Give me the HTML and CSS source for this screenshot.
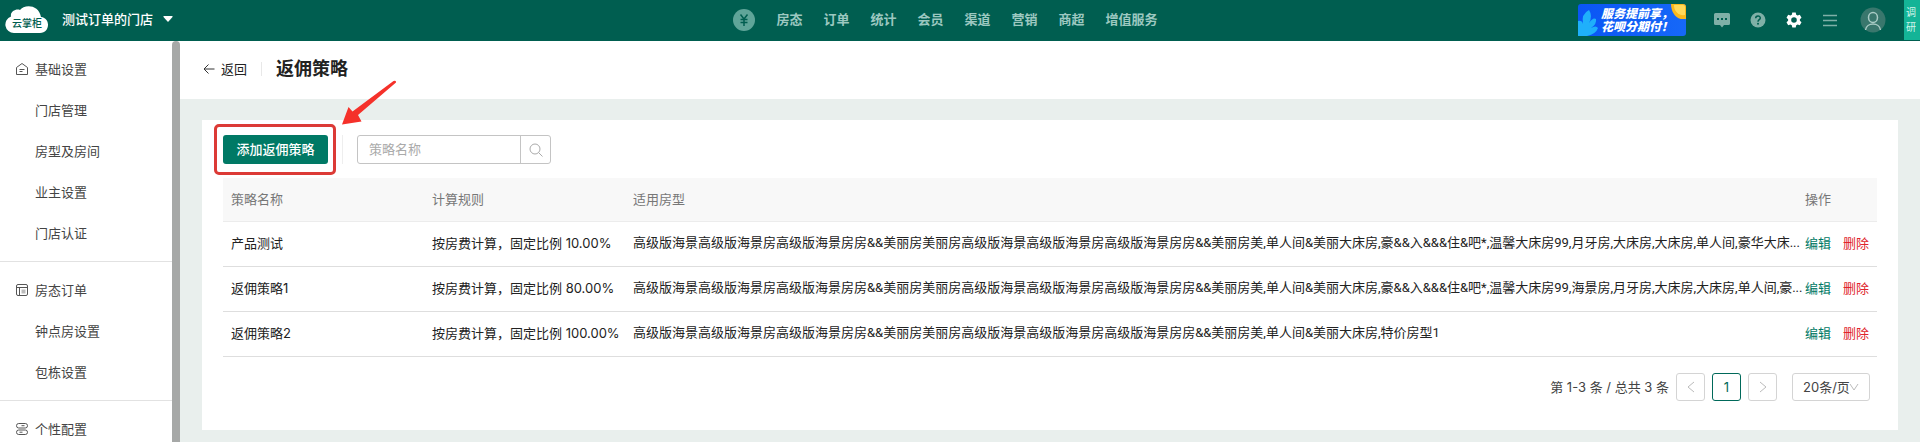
FILE: index.html
```html
<!DOCTYPE html>
<html lang="zh-CN">
<head>
  <meta charset="UTF-8">
  <title>返佣策略</title>
  <link rel="stylesheet" href="styles.css">
</head>
<body>
  <header class="topbar">
    <div class="topbar-left">
      <svg class="logo" width="44" height="28" viewBox="0 0 44 28">
        <path fill="#fff" d="M9 27a8.500 8.500 0 0 1-3-16.500C5 5.500 11 2.500 15 4 19-2 34-2 36 11c10 1 9 16-1 16z"/>
        <text x="22" y="21" text-anchor="middle" class="logo-text">云掌柜</text>
      </svg>
      <button class="store-switch">测试订单的门店
        <svg width="10" height="6" viewBox="0 0 10 6"><path fill="#fff" d="M1 0h8q1 0 .5 1L5.500 5.500q-.5.500-1 0L.5 1Q0 0 1 0z"/></svg>
      </button>
    </div>
    <nav class="main-nav">
      <a href="#" class="money">
        <svg width="22" height="22" viewBox="0 0 22 22"><circle cx="11" cy="11" r="11" fill="#5fa599"/><path d="M7.500 5.500L11 10l3.500-4.500M11 10v7M7.500 10.500h7M7.500 13.500h7" fill="none" stroke="#005e50" stroke-width="1.500"/></svg>
      </a>
      <a href="#">房态</a>
      <a href="#">订单</a>
      <a href="#">统计</a>
      <a href="#">会员</a>
      <a href="#">渠道</a>
      <a href="#">营销</a>
      <a href="#">商超</a>
      <a href="#">增值服务</a>
    </nav>
    <div class="topbar-right">
      <a href="#" class="promo">
        <svg class="promo-leaf" width="22" height="26" viewBox="0 0 22 26"><path fill="#1fb0fb" d="M0 26V11q4-1 5 3Q3 4 11 0q4 6 0 13 4-6 7-4 1 5-5 9 5-3 7 0-2 6-11 8z"/></svg>
        <svg class="promo-coin" width="15" height="15" viewBox="0 0 15 15"><path fill="#fbb81c" d="M0 0h12q3 0 3 3v12C6 17 0 9 0 0z"/><path fill="#ffd95a" d="M3 1h9q2 0 2 2v8C7 12 3 7 3 1z"/></svg>
        <span>服务提前享，</span>
        <span>花呗分期付！</span>
      </a>
      <button class="icon-btn" aria-label="消息">
        <svg width="16" height="16" viewBox="0 0 16 16"><path fill="#7fb0a7" d="M1.500 1h13q1.500 0 1.500 1.500v9q0 1.500-1.500 1.500H10l-2 2.500L6 13H1.500Q0 13 0 11.500v-9Q0 1 1.500 1z"/><path fill="#005e50" d="M3 6h2v2H3zM7 6h2v2H7zM11 6h2v2h-2z"/></svg>
      </button>
      <button class="icon-btn" aria-label="帮助">
        <svg width="16" height="16" viewBox="0 0 16 16"><circle cx="8" cy="8" r="7.500" fill="#7fb0a7"/><path d="M5.700 6.300c0-3 4.600-3 4.600-.3C10.300 7.700 8 7.700 8 9.700" fill="none" stroke="#005e50" stroke-width="1.500"/><circle cx="8" cy="11.700" r="1" fill="#005e50"/></svg>
      </button>
      <button class="icon-btn" aria-label="设置">
        <svg width="16" height="16" viewBox="0 0 16 16"><path fill="#fff" fill-rule="evenodd" d="M6.300.5h3.400l.5 2.200 1.400.8 2.200-.7 1.700 3L13.900 7.300v1.400l1.600 1.500-1.700 3-2.200-.7-1.400.8-.5 2.200H6.300l-.5-2.200-1.400-.8-2.200.7-1.700-3 1.600-1.500V7.300L.5 5.800l1.700-3 2.200.7 1.400-.8zM8 5.200a2.800 2.800 0 1 0 0 5.600 2.800 2.800 0 0 0 0-5.600z"/></svg>
      </button>
      <button class="icon-btn" aria-label="菜单">
        <svg width="16" height="16" viewBox="0 0 16 16"><path d="M1 3.500h14M1 8.500h14M1 13.500h14" stroke="#7fb0a7" stroke-width="1.500"/></svg>
      </button>
      <button class="avatar" aria-label="账号">
        <svg width="26" height="26" viewBox="0 0 26 26"><circle cx="13" cy="13" r="12.500" fill="#39776d"/><ellipse cx="13" cy="10.500" rx="4.500" ry="5" fill="none" stroke="#a9cbc5" stroke-width="1.500"/><path d="M5.500 23c1-8 14-8 15 0" fill="none" stroke="#a9cbc5" stroke-width="1.500"/></svg>
      </button>
    </div>
    <a href="#" class="survey">调研</a>
  </header>

  <div class="shell">
    <aside class="sidebar">
      <ul class="menu-group">
        <li><a href="#">
          <svg width="12" height="12" viewBox="0 0 12 12"><path d="M.5 4.500L6 .5l5.500 4v7H.5zM3.500 6.500h5M3.500 8.500h3" fill="none" stroke="#555"/></svg>
          基础设置</a></li>
        <li><a href="#">门店管理</a></li>
        <li><a href="#">房型及房间</a></li>
        <li><a href="#">业主设置</a></li>
        <li><a href="#">门店认证</a></li>
      </ul>
      <ul class="menu-group">
        <li><a href="#">
          <svg width="12" height="12" viewBox="0 0 12 12"><rect x=".5" y=".5" width="11" height="11" rx="1.500" fill="none" stroke="#555"/><path d="M.5 3.500h11M3.500 3.500v8" stroke="#555"/><path fill="#bbb" d="M5.500 5.500h4v4h-4z"/></svg>
          房态订单</a></li>
        <li><a href="#">钟点房设置</a></li>
        <li><a href="#">包栋设置</a></li>
      </ul>
      <ul class="menu-group">
        <li><a href="#">
          <svg width="12" height="12" viewBox="0 0 12 12"><g fill="none" stroke="#555"><rect x=".5" y=".5" width="11" height="4.500" rx="2.200"/><rect x=".5" y="7" width="11" height="4.500" rx="2.200"/><path d="M5.500 2.700h3M3.500 9.200h3"/></g></svg>
          个性配置</a></li>
      </ul>
    </aside>
    <div class="scrollbar"></div>

    <main class="content">
      <div class="page-head">
        <a href="#" class="back">
          <svg width="12" height="12" viewBox="0 0 12 12"><path d="M11.500 6H1M5.500 1.500L1 6l4.500 4.500" fill="none" stroke="#333"/></svg>
          返回
        </a>
        <h1>返佣策略</h1>
      </div>

      <section class="card">
        <div class="toolbar">
          <div class="add-wrap">
            <button class="add-btn">添加返佣策略</button>
            <div class="mark-box"></div>
            <svg class="mark-arrow" width="56" height="46" viewBox="0 0 56 46"><path fill="#f5312a" d="M52.500 1q3-1 2.500 1.500L17 35l3.500 6.500L1 44.500 7.500 27l4 4.500z"/></svg>
          </div>
          <form class="search">
            <input type="text" placeholder="策略名称" aria-label="策略名称">
            <button type="button" aria-label="搜索">
              <svg width="14" height="14" viewBox="0 0 14 14"><circle cx="6" cy="6" r="5" fill="none" stroke="#aaa"/><path d="M9.500 9.500L13.500 13.500" stroke="#aaa"/></svg>
            </button>
          </form>
        </div>

        <table class="plans">
          <thead>
            <tr>
              <th class="col-name">策略名称</th>
              <th class="col-rule">计算规则</th>
              <th>适用房型</th>
              <th class="col-action">操作</th>
            </tr>
          </thead>
          <tbody>
            <tr>
              <td>产品测试</td>
              <td>按房费计算，固定比例 10.00%</td>
              <td class="rooms">高级版海景高级版海景房高级版海景房房&amp;&amp;美丽房美丽房高级版海景高级版海景房高级版海景房房&amp;&amp;美丽房美,单人间&amp;美丽大床房,豪&amp;&amp;入&amp;&amp;&amp;住&amp;吧*,温馨大床房99,月牙房,大床房,大床房,单人间,豪华大床...</td>
              <td class="col-action"><a href="#" class="edit">编辑</a><a href="#" class="del">删除</a></td>
            </tr>
            <tr>
              <td>返佣策略1</td>
              <td>按房费计算，固定比例 80.00%</td>
              <td class="rooms">高级版海景高级版海景房高级版海景房房&amp;&amp;美丽房美丽房高级版海景高级版海景房高级版海景房房&amp;&amp;美丽房美,单人间&amp;美丽大床房,豪&amp;&amp;入&amp;&amp;&amp;住&amp;吧*,温馨大床房99,海景房,月牙房,大床房,大床房,单人间,豪...</td>
              <td class="col-action"><a href="#" class="edit">编辑</a><a href="#" class="del">删除</a></td>
            </tr>
            <tr>
              <td>返佣策略2</td>
              <td>按房费计算，固定比例 100.00%</td>
              <td class="rooms">高级版海景高级版海景房高级版海景房房&amp;&amp;美丽房美丽房高级版海景高级版海景房高级版海景房房&amp;&amp;美丽房美,单人间&amp;美丽大床房,特价房型1</td>
              <td class="col-action"><a href="#" class="edit">编辑</a><a href="#" class="del">删除</a></td>
            </tr>
          </tbody>
        </table>

        <div class="pager">
          <span>第 1-3 条 / 总共 3 条</span>
          <button class="page-btn" aria-label="上一页">
            <svg width="8" height="12" viewBox="0 0 8 12"><path d="M7 1L1 6l6 5" fill="none" stroke="#bbb"/></svg>
          </button>
          <button class="page-btn current">1</button>
          <button class="page-btn" aria-label="下一页">
            <svg width="8" height="12" viewBox="0 0 8 12"><path d="M1 1l6 5-6 5" fill="none" stroke="#bbb"/></svg>
          </button>
          <div class="page-size">
            <select aria-label="每页条数">
              <option>20条/页</option>
            </select>
            <svg width="10" height="8" viewBox="0 0 10 8"><path d="M1 1l4 6 4-6" fill="none" stroke="#bbb"/></svg>
          </div>
        </div>
      </section>
    </main>
  </div>
</body>
</html>
```
FILE: styles.css
```css
* {
  box-sizing: border-box;
}
body {
  margin: 0;
  height: 100vh;
  display: flex;
  flex-direction: column;
  overflow: hidden;
  font-family: Inter, "Noto Sans CJK SC", sans-serif;
  font-size: 13px;
  line-height: 20px;
  color: #222;
}
a {
  color: inherit;
  text-decoration: none;
}
button, input, select {
  font: inherit;
  color: inherit;
  margin: 0;
  padding: 0;
  border: 0;
  background: none;
}
svg {
  display: block;
  flex: none;
}

/* Top bar */
.topbar {
  position: relative;
  flex: none;
  display: flex;
  align-items: center;
  height: 41px;
  padding: 0 34px 2px 5px;
  background: #005e50;
}
.topbar-left, .topbar-right {
  flex: 1;
  display: flex;
  align-items: center;
}
.topbar-left {
  gap: 13px;
}
.logo-text {
  font-size: 10px;
  font-weight: 500;
  fill: #005e50;
}
.store-switch {
  display: flex;
  align-items: center;
  gap: 10px;
  padding-bottom: 2px;
  font-weight: 500;
  color: #fff;
}
.main-nav {
  display: flex;
  align-items: center;
  gap: 21px;
  font-weight: 700;
  color: #9cc8c0;
}
.main-nav a {
  padding-bottom: 2px;
}
.main-nav .money {
  padding-bottom: 0;
}
.topbar-right {
  justify-content: flex-end;
}
.promo {
  position: relative;
  width: 108px;
  height: 32px;
  margin-right: 18px;
  padding: 3px 0 0 23px;
  border-radius: 3px;
  background: linear-gradient(90deg, #0a55f5, #1668f8);
  color: #fff;
  font-size: 12px;
  font-weight: 900;
  font-style: italic;
  line-height: 13px;
  white-space: nowrap;
}
.promo span {
  display: block;
}
.promo-leaf {
  position: absolute;
  left: 0;
  bottom: 0;
}
.promo-coin {
  position: absolute;
  top: 0;
  right: 0;
}
.icon-btn {
  width: 36px;
  display: flex;
  justify-content: center;
}
.avatar {
  margin-left: 12px;
}
.survey {
  position: absolute;
  top: 0;
  right: 0;
  width: 16px;
  height: 40px;
  padding: 5px 2px;
  background: #14b497;
  color: #d5f5ec;
  font-size: 10px;
  line-height: 15px;
}

/* Sidebar */
.shell {
  flex: 1;
  display: flex;
  min-height: 0;
}
.sidebar {
  flex: none;
  width: 172px;
  overflow: hidden;
  color: #444;
}
.menu-group {
  margin: 0;
  padding: 8px 0 7px;
  border-bottom: 1px solid #e2e2e2;
  list-style: none;
}
.menu-group a {
  display: flex;
  align-items: center;
  height: 41px;
  padding: 0 0 2px 35px;
}
.menu-group svg {
  margin: 0 7px 0 -19px;
}
.scrollbar {
  flex: none;
  width: 8px;
  border-radius: 4px 4px 0 0;
  background: #a6a8a7;
}

/* Content */
.content {
  flex: 1;
  min-width: 0;
  background: #e9efed;
}
.page-head {
  display: flex;
  align-items: center;
  height: 58px;
  padding: 0 0 2px 23px;
  background: #fff;
}
.back {
  display: flex;
  align-items: center;
  gap: 6px;
  padding-right: 14px;
  border-right: 1px solid #e8e8e8;
  line-height: 14px;
}
.page-head h1 {
  margin: 0 0 0 14px;
  font-size: 18px;
  font-weight: 700;
}
.card {
  margin: 21px 22px 12px;
  padding: 15px 21px 29px;
  background: #fff;
}
.toolbar {
  display: flex;
  margin-bottom: 14px;
}
.add-wrap {
  position: relative;
  padding-right: 14px;
  margin-right: 14px;
  border-right: 1px solid #eee;
}
.add-btn {
  height: 29px;
  width: 105px;
  padding-bottom: 2px;
  border-radius: 3px;
  background: #007965;
  color: #fff;
  font-weight: 500;
}
.mark-box {
  position: absolute;
  top: -11px;
  left: -9px;
  width: 122px;
  height: 51px;
  border: 3px solid #dc3a36;
  border-radius: 5px;
  pointer-events: none;
}
.mark-arrow {
  position: absolute;
  top: -55px;
  left: 118px;
}
.search {
  display: flex;
  width: 194px;
  height: 29px;
  border: 1px solid #c4c4c4;
  border-radius: 3px;
}
.search input {
  flex: 1;
  min-width: 0;
  padding: 0 0 2px 11px;
  outline: none;
}
.search input::placeholder {
  color: #aaa;
}
.search button {
  width: 30px;
  display: flex;
  align-items: center;
  justify-content: center;
  border-left: 1px solid #c4c4c4;
}

/* Table */
.plans {
  width: 100%;
  table-layout: fixed;
  border-collapse: separate;
  border-spacing: 0;
}
.plans th, .plans td {
  height: 45px;
  padding: 0 0 2px 8px;
  border-bottom: 1px solid #dedede;
  text-align: left;
  white-space: nowrap;
}
.plans th {
  height: 44px;
  background: #f8f8f8;
  border-color: #ececec;
  color: #777;
  font-weight: 400;
}
.plans .rooms {
  font-family: Roboto, "Noto Sans CJK SC", sans-serif;
  overflow: hidden;
  text-overflow: ellipsis;
}
.plans .col-name, .plans .col-rule {
  width: 201px;
}
.plans .col-action {
  width: 72px;
  padding-left: 0;
}
.edit {
  margin-right: 12px;
  color: #007965;
}
.del {
  color: #e0242c;
}

/* Pager */
.pager {
  display: flex;
  align-items: center;
  justify-content: flex-end;
  gap: 7px;
  margin-top: 16px;
  padding-right: 7px;
  color: #444;
}
.page-btn {
  display: flex;
  align-items: center;
  justify-content: center;
  width: 29px;
  height: 28px;
  border: 1px solid #d4d4d4;
  border-radius: 3px;
}
.page-btn.current {
  border-color: #00695a;
  color: #00695a;
}
.page-size {
  position: relative;
  margin-left: 8px;
}
.page-size select {
  display: block;
  width: 78px;
  height: 28px;
  padding-left: 10px;
  border: 1px solid #d4d4d4;
  border-radius: 3px;
  appearance: none;
}
.page-size svg {
  position: absolute;
  top: 10px;
  right: 11px;
  pointer-events: none;
}
```
